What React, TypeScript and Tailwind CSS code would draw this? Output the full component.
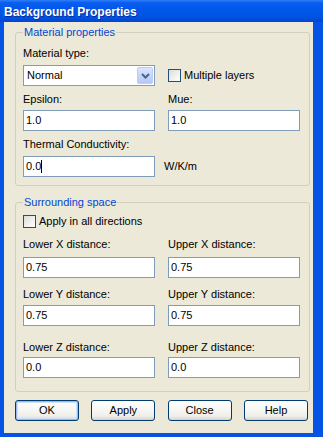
import React from "react";

function Label({ children, className = "" }: { children: React.ReactNode; className?: string }) {
  return <div className={`h-[13px] leading-[13px] text-[11px] text-black whitespace-nowrap ${className}`}>{children}</div>;
}

function TextBox({ value, caret = false }: { value: string; caret?: boolean }) {
  return (
    <div className="w-[132px] h-[21px] border border-[#7f9db9] bg-white flex items-center pl-[2px] text-[11px] leading-[13px] text-black">
      <span>{value}</span>
      {caret && <span className="w-px h-[13px] bg-black" />}
    </div>
  );
}

function CheckBox({ label }: { label: string }) {
  return (
    <div className="flex items-center h-[13px] gap-[3px]">
      <div className="w-[13px] h-[13px] border border-[#1c5180] bg-[linear-gradient(135deg,#dcdcd7_0%,#f2f2ef_60%,#ffffff_100%)]" />
      <span className="text-[11px] leading-[13px] text-black whitespace-nowrap">{label}</span>
    </div>
  );
}

function Button({ children, isDefault = false }: { children: React.ReactNode; isDefault?: boolean }) {
  return (
    <div
      className={`w-[64px] h-[21px] border border-[#003c74] rounded-[3px] flex items-center justify-center text-[11px] leading-[13px] text-black bg-[linear-gradient(180deg,#ffffff_0%,#f7f7f4_45%,#efeee9_80%,#d8d2c6_100%)] ${
        isDefault ? "shadow-[inset_0_0_0_1px_#9ab8f3,inset_0_0_0_2px_#cfe0fc]" : ""
      }`}
    >
      {children}
    </div>
  );
}

export default function App() {
  return (
    <div className="w-[323px] h-[437px] flex flex-col bg-[#0553e4] overflow-hidden font-['Liberation_Sans','Arial',sans-serif]">
      {/* Title bar */}
      <div className="h-[22px] shrink-0 flex items-center pt-[2px] pl-[4px] bg-[linear-gradient(180deg,#2f80f7_0%,#0a5ef0_12%,#0058ea_40%,#0054e4_75%,#0046d0_100%)]">
        <span className="text-white font-bold text-[12px] leading-[14px] [text-shadow:1px_1px_0_#0b2c9a]">
          Background Properties
        </span>
      </div>

      {/* Body */}
      <div className="flex-1 ml-[4px] mr-[10px] mb-[4px] bg-[#ece9d8] flex flex-col">
        {/* Material properties */}
        <fieldset className="ml-[11px] mt-[4px] w-[295px] border border-[#d0d0bf] rounded-[3px] pl-[7px] pr-[8px] pt-[8px] pb-[8px]">
          <legend className="px-[1px] text-[11px] leading-[13px] text-[#0046d5]">Material properties</legend>
          <Label>Material type:</Label>
          <div className="flex gap-[13px] mt-[5px] items-center">
            <div className="w-[132px] h-[21px] border border-[#7f9db9] bg-white flex items-center justify-between pl-[3px] pr-px">
              <span className="text-[11px] leading-[13px] text-black">Normal</span>
              <div className="w-[16px] h-[17px] rounded-[2px] border border-[#b9cdf7] bg-[linear-gradient(180deg,#dbe6fe_0%,#c6d6fb_50%,#b5c8f6_100%)] flex items-center justify-center">
                <svg width="9" height="6" viewBox="0 0 9 6">
                  <path d="M1 1 L4.5 4.5 L8 1" fill="none" stroke="#4d6185" strokeWidth="2" />
                </svg>
              </div>
            </div>
            <CheckBox label="Multiple layers" />
          </div>
          <div className="flex gap-[13px] mt-[7px]">
            <Label className="w-[132px]">Epsilon:</Label>
            <Label className="w-[132px]">Mue:</Label>
          </div>
          <div className="flex gap-[13px] mt-[4px]">
            <TextBox value="1.0" />
            <TextBox value="1.0" />
          </div>
          <Label className="mt-[7px]">Thermal Conductivity:</Label>
          <div className="flex items-center mt-[5px] gap-[9px]">
            <TextBox value="0.0" caret />
            <span className="text-[11px] leading-[13px] text-black">W/K/m</span>
          </div>
        </fieldset>

        {/* Surrounding space */}
        <fieldset className="ml-[11px] mt-[10px] w-[295px] border border-[#d0d0bf] rounded-[3px] pl-[7px] pr-[8px] pt-[6px] pb-[13px]">
          <legend className="px-[1px] text-[11px] leading-[13px] text-[#0046d5]">Surrounding space</legend>
          <CheckBox label="Apply in all directions" />
          <div className="flex gap-[13px] mt-[10px]">
            <Label className="w-[132px]">Lower X distance:</Label>
            <Label className="w-[132px]">Upper X distance:</Label>
          </div>
          <div className="flex gap-[13px] mt-[6px]">
            <TextBox value="0.75" />
            <TextBox value="0.75" />
          </div>
          <div className="flex gap-[13px] mt-[10px]">
            <Label className="w-[132px]">Lower Y distance:</Label>
            <Label className="w-[132px]">Upper Y distance:</Label>
          </div>
          <div className="flex gap-[13px] mt-[4px]">
            <TextBox value="0.75" />
            <TextBox value="0.75" />
          </div>
          <div className="flex gap-[13px] mt-[15px]">
            <Label className="w-[132px]">Lower Z distance:</Label>
            <Label className="w-[132px]">Upper Z distance:</Label>
          </div>
          <div className="flex gap-[13px] mt-[3px]">
            <TextBox value="0.0" />
            <TextBox value="0.0" />
          </div>
        </fieldset>

        {/* Buttons */}
        <div className="ml-[11px] w-[293px] mt-[8px] flex justify-between">
          <Button isDefault>OK</Button>
          <Button>Apply</Button>
          <Button>Close</Button>
          <Button>Help</Button>
        </div>
      </div>
    </div>
  );
}
